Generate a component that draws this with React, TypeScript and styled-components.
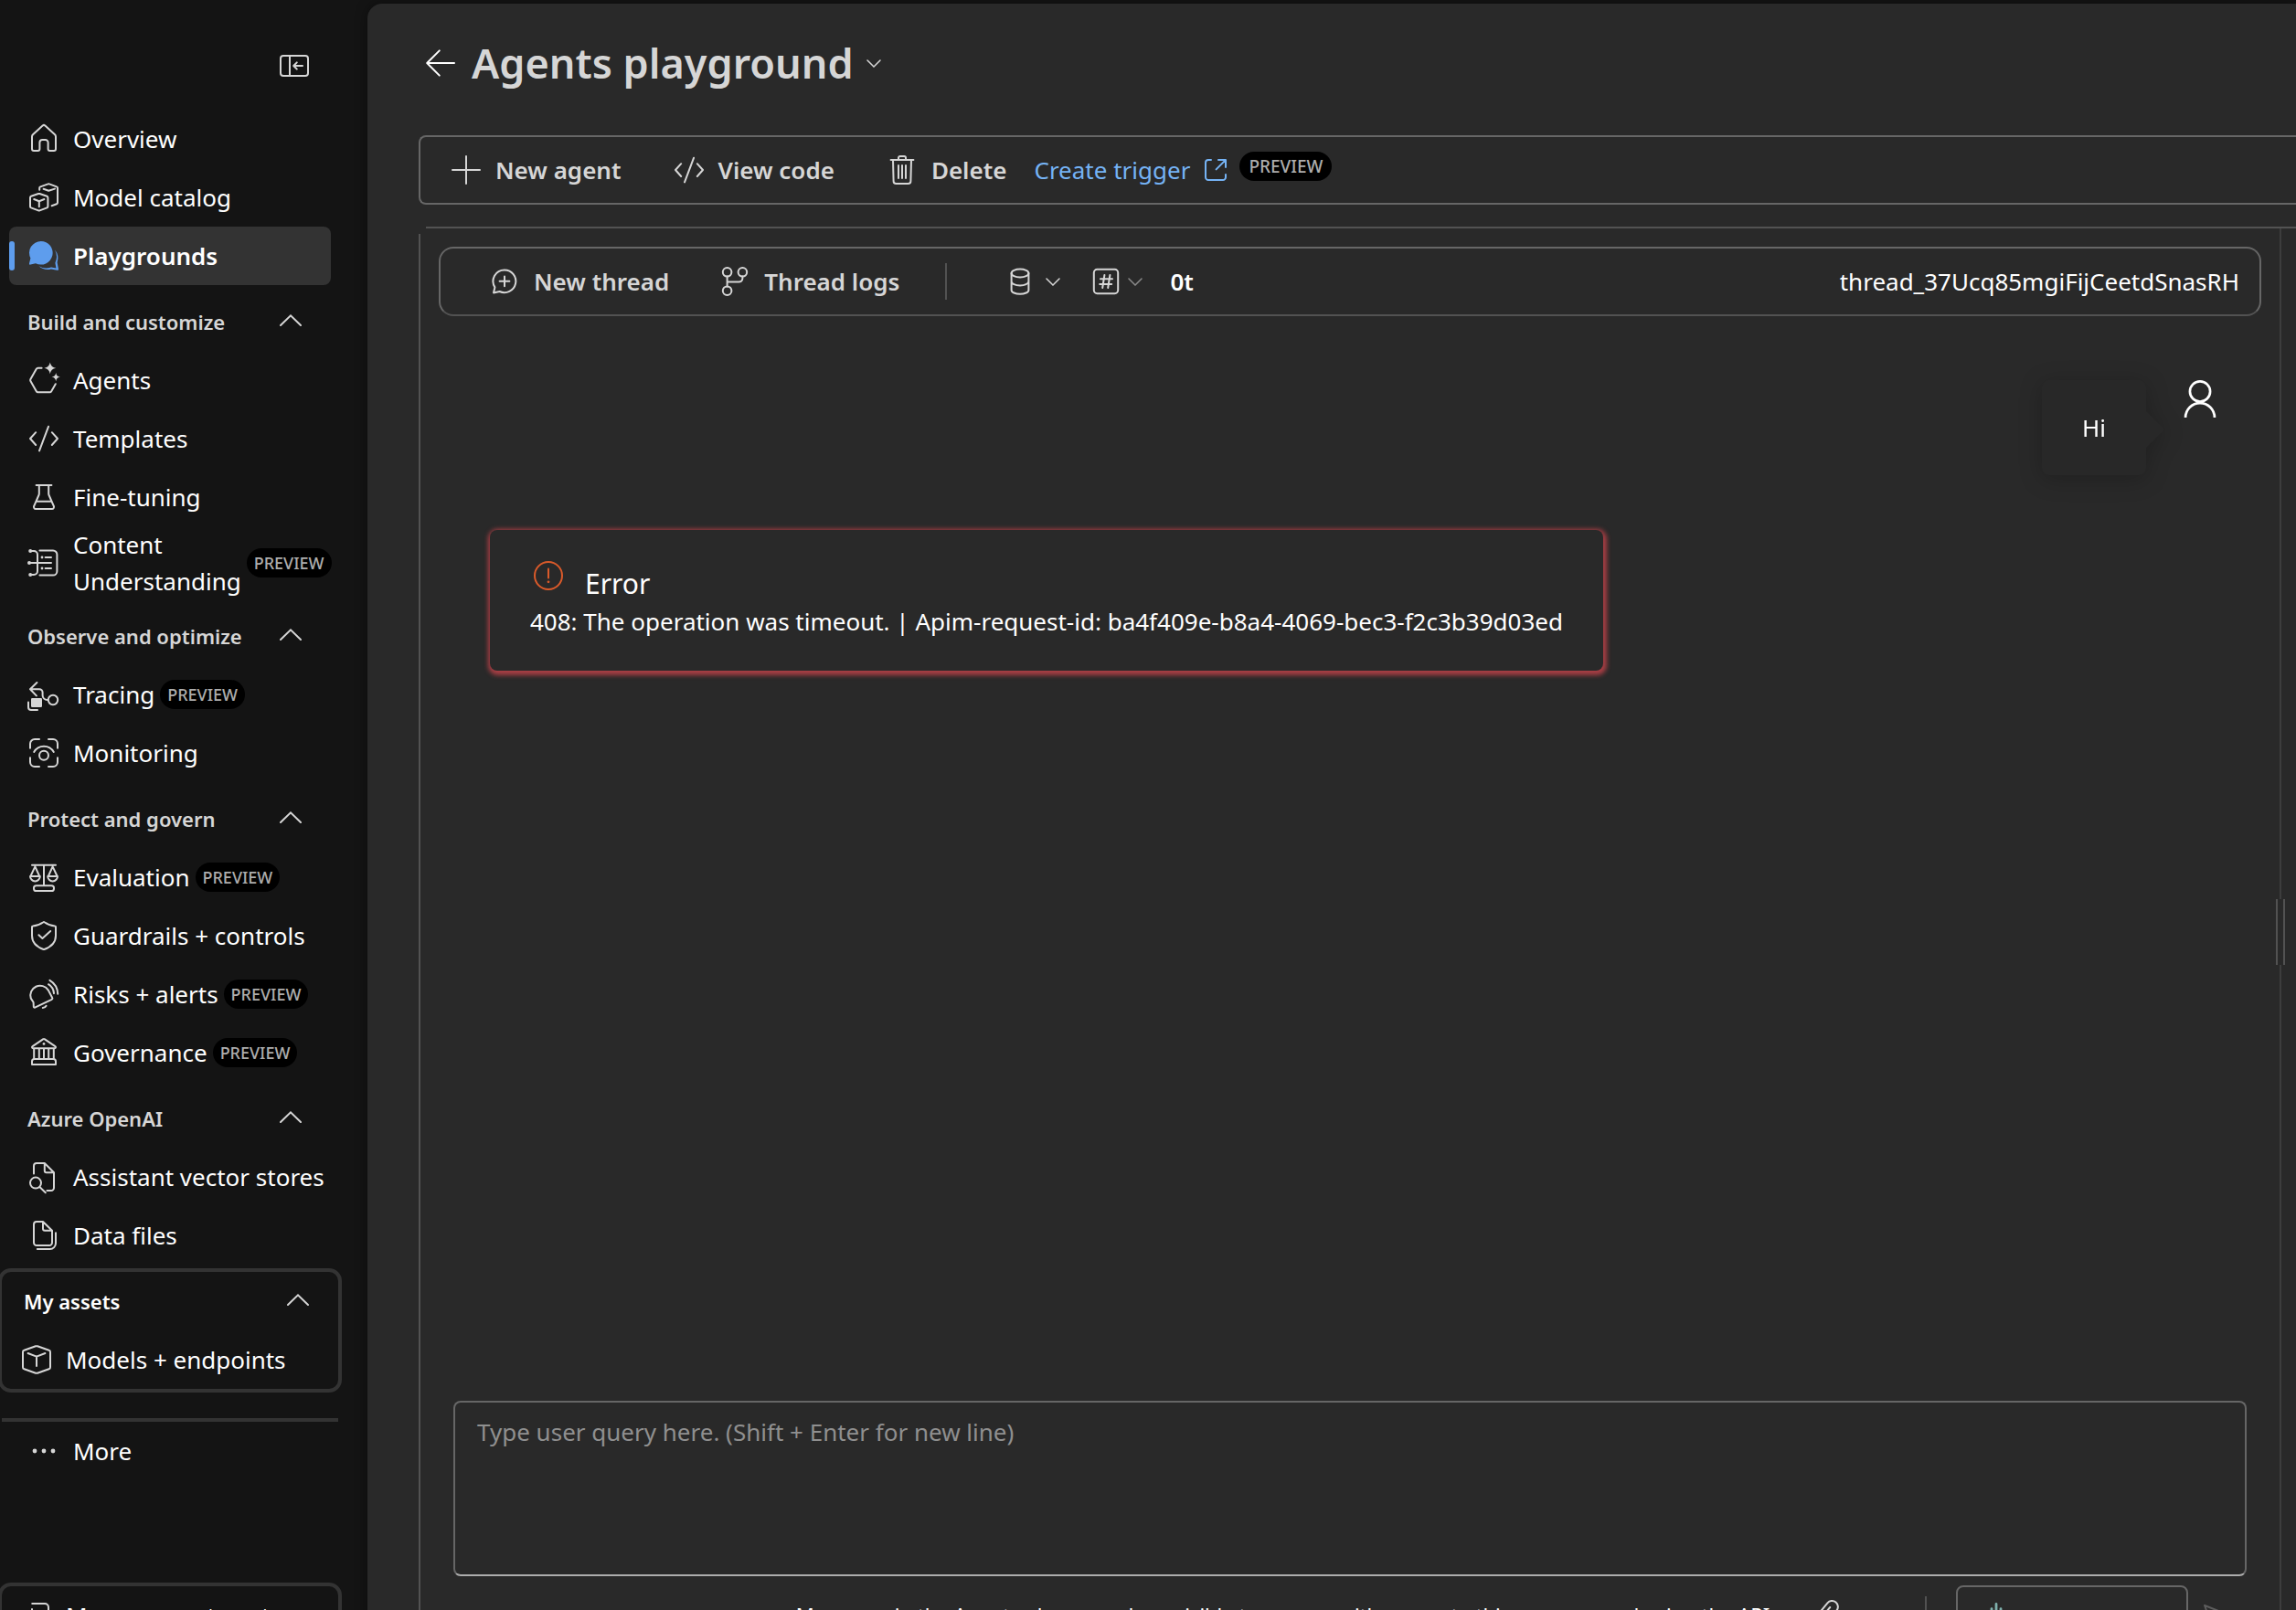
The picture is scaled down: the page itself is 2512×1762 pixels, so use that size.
import React from "react";
import styled, { createGlobalStyle, css } from "styled-components";

const GlobalStyle = createGlobalStyle`
  *, *::before, *::after { box-sizing: border-box; }
  body {
    margin: 0;
    background: #141414;
    color: #ffffff;
    font-family: "Noto Sans", "Open Sans", sans-serif;
    font-size: 26px;
    line-height: 40px;
    overflow: hidden;
  }
  button, textarea { font: inherit; color: inherit; }
  button { background: none; border: 0; padding: 0; cursor: pointer; }
  a { color: inherit; text-decoration: none; }
`;

/* ---------- icons ---------- */

const Glyph = styled.svg<{ $size?: number }>`
  display: block;
  flex: none;
  width: ${(p) => p.$size ?? 40}px;
  height: ${(p) => p.$size ?? 40}px;
  fill: none;
  stroke: currentColor;
  stroke-width: 1;
  stroke-linecap: round;
  stroke-linejoin: round;
`;

const Chevron = styled.svg<{ $width: number }>`
  display: block;
  flex: none;
  width: ${(p) => p.$width}px;
  height: auto;
  fill: none;
  stroke: currentColor;
  stroke-width: 2;
  stroke-linecap: round;
`;

const solid = { fill: "currentColor", stroke: "none" } as const;

const icons = {
  collapse: (
    <>
      <rect x="2.5" y="4.5" width="15" height="11" rx="1.5" />
      <path d="M7.5 4.5v11" />
      <path d="M14.5 10H9.8M11.4 8.2 9.6 10l1.8 1.8" />
    </>
  ),
  home: (
    <path d="M9.3 2.8a1 1 0 0 1 1.4 0L16 7.6a1.5 1.5 0 0 1 .5 1.1v6.8a1 1 0 0 1-1 1h-2.2a1 1 0 0 1-1-1V12a1.5 1.5 0 0 0-1.5-1.5H9.2A1.5 1.5 0 0 0 7.7 12v3.5a1 1 0 0 1-1 1H4.5a1 1 0 0 1-1-1V8.7A1.5 1.5 0 0 1 4 7.6z" />
  ),
  catalog: (
    <>
      <path d="M7 8 3 9.4a.8.8 0 0 0-.5.7V15c0 .3.2.6.5.7l4 1.5h.7l4-1.5c.3-.1.5-.4.5-.7v-4.9a.8.8 0 0 0-.5-.7L7.7 8z" />
      <path d="m4.6 11 2.8 1.1 2.8-1.1M7.4 12.1v3" />
      <path d="M7.6 5.9v-1c0-.3.2-.6.5-.7l4.2-1.5c.2-.1.5-.1.7 0l4 1.5c.3.1.5.4.5.7v8c0 .3-.2.6-.5.7l-2.7 1M9.8 5.4l2.8 1 3.4-1.1" />
    </>
  ),
  chat: (
    <>
      <path {...solid} d="M8.4 2a6.4 6.4 0 1 1-2.9 12.1l-2.8.7a.6.6 0 0 1-.7-.7l.7-2.8A6.4 6.4 0 0 1 8.4 2z" />
      <path {...solid} d="M16 6.8a7 7 0 0 1 1.3 6.8l.7 3.6a.6.6 0 0 1-.7.7l-3.4-.7a7.2 7.2 0 0 1-6.6-1.6 7.9 7.9 0 0 0 6.7.6l2.7.5-.5-2.8A8 8 0 0 0 16 6.8z" />
    </>
  ),
  agent: (
    <>
      <path d="M8.8 3.4H6.8a1 1 0 0 0-.9.5L2.7 9.5a1 1 0 0 0 0 1l3.2 5.6a1 1 0 0 0 .9.5h6.4a1 1 0 0 0 .9-.5l2.3-4" />
      <path {...solid} d="M13.4.2c.5 2 1.2 2.7 3.2 3.2-2 .5-2.7 1.2-3.2 3.2-.5-2-1.2-2.7-3.2-3.2 2-.5 2.7-1.2 3.2-3.2zM16.6 6c.3 1.5.8 2 2.3 2.3-1.5.3-2 .8-2.3 2.3-.3-1.5-.8-2-2.3-2.3 1.500-.3 2-.8 2.300-2.300z" />
    </>
  ),
  code: <path d="M5.6 6.6 2.5 10l3.1 3.5M14.4 6.6 17.5 10l-3.1 3.5M12.5 3.4l-5 13.3" />,
  beaker: (
    <path d="M5.8 3.5h8.4M7.4 3.5v4.7a2 2 0 0 1-.2.8l-2.6 5.9a1.1 1.1 0 0 0 1 1.6h8.8a1.1 1.1 0 0 0 1-1.6L12.8 9a2 2 0 0 1-.2-.8V3.5M5.9 12.4h8.2" />
  ),
  content: (
    <>
      <path d="M2.4 3.5h2.1a2 2 0 0 1 2 2v9a2 2 0 0 1-2 2H2.4M2 10h12M7.700 3.200H15A2.200 2.200 0 0 1 17.200 5.400v9.200A2.200 2.200 0 0 1 15 16.800H7.700M10.800 7H14M10.800 13H14" />
      <g {...solid}>
        <circle cx="2.6" cy="3.5" r="1" />
        <circle cx="2" cy="10" r="1" />
        <circle cx="2.6" cy="16.5" r="1" />
        <circle cx="9" cy="7" r=".7" />
        <circle cx="9" cy="13" r=".7" />
      </g>
    </>
  ),
  trace: (
    <>
      <path d="M6.2 3.5 2.5 7.1l3.4 3.6M2.5 7.1h5A1.8 1.8 0 0 1 9.3 8.9v1.6a2.6 2.6 0 0 0 2.6 2.5" />
      <circle cx="15" cy="13" r="2.6" />
      <rect {...solid} x="3" y="12" width="6" height="5" rx=".6" />
      <path d="M1.5 14.3v2.7A1.5 1.5 0 0 0 3 18.5h3.5" />
    </>
  ),
  monitor: (
    <>
      <path d="M2.5 7.4V5A2.5 2.5 0 0 1 5 2.5h2.5M12.5 2.5H15A2.5 2.5 0 0 1 17.5 5v2.4M17.5 12.6V15a2.5 2.5 0 0 1-2.5 2.5h-2.5M7.5 17.5H5A2.5 2.5 0 0 1 2.5 15v-2.4M4.6 9.5a6.200 6.200 0 0 1 10.800 0" />
      <circle cx="10" cy="11.4" r="2.5" />
    </>
  ),
  scale: (
    <>
      <path d="M3.5 3.4h13M10 3.4v10.8M5.2 4.2 2.7 9.5M5.2 4.2l2.4 5.3M14.8 4.2l-2.4 5.3M14.8 4.2l2.5 5.3M2.5 9.5h5.4a2.7 2.7 0 0 1-5.4 0zM12.1 9.5h5.4a2.7 2.7 0 0 1-5.4 0z" />
      <rect x="4.5" y="14.6" width="11" height="2.9" rx="1.3" />
    </>
  ),
  shield: (
    <>
      <path d="M9.7 2.6a.5.5 0 0 1 .6 0c1.7 1.2 3.5 1.9 5.7 2.1.3 0 .5.2.5.5V10c0 3.5-2.2 6-6.300 7.500h-.4C5.700 16 3.500 13.500 3.500 10V5.200c0-.3.2-.5.5-.5 2.200-.2 4-.9 5.700-2.100z" />
      <path d="m7.2 9.6 2 1.9 4.4-4" />
    </>
  ),
  alert: (
    <path d="M2.9 12.3a5.3 5.3 0 0 1 9.5-4.5l2.2 4.2a.6.6 0 0 1-.3.9L5.1 17.3a.5.5 0 0 1-.7-.5l-.1-2.3zM9.400 17.500c.9 0 1.500-.4 1.900-1.100M12.500 4.600a6.500 6.500 0 0 1 3 5M13.200 2.400a9 9 0 0 1 4.400 7.500" />
  ),
  bank: (
    <>
      <path d="M9.7 2.6a.5.5 0 0 1 .6 0l5.9 4c.5.3.3 1-.3 1H4.1c-.6 0-.8-.7-.3-1zM4.6 7.6v5.7M7.4 7.6v5.7M10 7.6v5.7M12.6 7.6v5.7M15.4 7.6v5.7" />
      <path d="M4.8 13.5h10.4a1.3 1.3 0 0 1 1.3 1.3v1.7h-13v-1.7a1.3 1.3 0 0 1 1.3-1.3z" />
      <circle {...solid} cx="10" cy="5.2" r=".7" />
    </>
  ),
  docSearch: (
    <>
      <path d="M4.5 8.3V4A1.5 1.5 0 0 1 6 2.5h4.4l5.1 5.1v8.4a1.5 1.5 0 0 1-1.5 1.5h-2.3M10.4 2.5v4.1a1 1 0 0 0 1 1h4.1" />
      <circle cx="5.5" cy="13.3" r="3" />
      <path d="m7.7 15.5 3.2 3.1" />
    </>
  ),
  docs: (
    <path d="M9.5 2.5H6A1.5 1.5 0 0 0 4.5 4v10A1.5 1.5 0 0 0 6 15.5h7a1.5 1.5 0 0 0 1.5-1.5V7.4zM9.5 2.5v3.9a1 1 0 0 0 1 1h4M6.400 17.500h6.900a3.200 3.200 0 0 0 3.200-3.200V8.600" />
  ),
  cube: (
    <>
      <path d="M9.5 2.6 3.2 4.9a1 1 0 0 0-.7 1v8.2a1 1 0 0 0 .7 1l6.3 2.3h1l6.3-2.3a1 1 0 0 0 .7-1V5.9a1 1 0 0 0-.7-1l-6.3-2.3z" />
      <path d="M5.3 6.5 10 8.3l4.7-1.8M10 8.3v5.2" />
    </>
  ),
  more: (
    <g {...solid}>
      <circle cx="5" cy="10" r="1.2" />
      <circle cx="10" cy="10" r="1.2" />
      <circle cx="15" cy="10" r="1.2" />
    </g>
  ),
  manage: <path d="M7.6 3.5h6.9a2 2 0 0 1 2 2v9a2 2 0 0 1-2 2H7.6M7.5 6.5v7" />,
  back: <path d="M17.5 10H2.8M9.4 3.2 2.6 10l6.8 6.8" />,
  plus: <path d="M10 2.5v15M2.5 10h15" />,
  trash: (
    <path d="M3.8 4.5h12.4M8 4.5V3.4a.9.9 0 0 1 .9-.9h2.2a.9.9 0 0 1 .9.9v1.1M5 4.5l.3 11.6a1.400 1.400 0 0 0 1.400 1.400h6.600a1.400 1.400 0 0 0 1.400-1.400L15 4.500M8 7.500v7M10 7.500v7M12 7.500v7" />
  ),
  open: (
    <path d="M7.5 4.5H6A1.5 1.5 0 0 0 4.5 6v8A1.5 1.5 0 0 0 6 15.5h8a1.5 1.5 0 0 0 1.5-1.5v-1.5M11.5 4.5h4v4M15.300 4.700l-5 5" />
  ),
  newThread: (
    <path d="M10 3.7a6.2 6.2 0 1 1-2.7 11.8l-3.3.7.7-3A6.2 6.2 0 0 1 10 3.7zM10 7.2v5.4M7.3 9.9h5.4" />
  ),
  branch: (
    <>
      <circle cx="5.8" cy="4.9" r="2.4" />
      <circle cx="14.2" cy="4.9" r="2.4" />
      <circle cx="5.8" cy="15.1" r="2.4" />
      <path d="M5.8 7.3v5.4M5.8 10.3h6.4a2 2 0 0 0 2-2v-1" />
    </>
  ),
  database: (
    <>
      <ellipse cx="10" cy="5.5" rx="4.7" ry="2.2" />
      <path d="M5.3 5.5v9.2c0 1.2 2.1 2.2 4.7 2.2s4.7-1 4.7-2.2V5.5M5.3 10c0 1.2 2.1 2.2 4.7 2.2s4.7-1 4.7-2.2" />
    </>
  ),
  hash: (
    <>
      <rect x="3.4" y="3.4" width="13.2" height="13.2" rx="1.8" />
      <path d="M9.2 6.5 8.1 13.5M12.2 6.5l-1.1 7M7 8.6h6.5M6.6 11.5h6.5" />
    </>
  ),
  error: (
    <>
      <circle cx="10" cy="10" r="7.5" />
      <path d="M10 6.3v5" />
      <circle {...solid} cx="10" cy="13.4" r=".7" />
    </>
  ),
  person: (
    <>
      <circle cx="10" cy="4.6" r="4.1" />
      <path d="M4.1 15.2a5.9 5.9 0 0 1 11.8 0" strokeLinecap="butt" />
    </>
  ),
  attach: <path d="m4.5 10 5.2-6.3a3.2 3.2 0 0 1 5 4.1l-6.6 8a2 2 0 0 1-3-2.5l6-7.3" />,
  voice: <path d="M10 4.2v11.6M7.5 6.8v6.4M12.5 6.8v6.4M5 9v2M15 9v2" strokeWidth="1.4" />,
  send: <path d="m3 5 14 5.5L3 16l2-5.5zM5 10.5h6" />,
};

type IconName = keyof typeof icons;

const Icon = ({ name, size }: { name: IconName; size?: number }) => (
  <Glyph viewBox="0 0 20 20" $size={size} aria-hidden="true">
    {icons[name]}
  </Glyph>
);

const ChevronUp = () => (
  <Chevron viewBox="0 0 24 13" $width={24} aria-hidden="true">
    <path d="M1 12 12 1.4 23 12" />
  </Chevron>
);

const ChevronDown = () => (
  <Chevron viewBox="0 0 16 9" $width={16} aria-hidden="true">
    <path d="m1 1 7 7 7-7" strokeWidth="1.5" />
  </Chevron>
);

/* ---------- shell ---------- */

const Shell = styled.div`
  display: flex;
  height: 100vh;
  overflow: hidden;
`;

/* ---------- sidebar ---------- */

const Sidebar = styled.aside`
  display: flex;
  flex-direction: column;
  flex: 0 0 402px;
  overflow: hidden;
  > * { flex-shrink: 0; }
`;

const SidebarTop = styled.div`
  display: flex;
  justify-content: flex-end;
  padding: 52px 60px 28px 0;
  color: #d6d6d6;
`;

const IconButton = styled.button`
  display: flex;
  align-items: center;
`;

const NavArea = styled.nav`
  padding: 0 40px 0 10px;
`;

const NavItem = styled.a<{ $active?: boolean }>`
  position: relative;
  display: flex;
  align-items: center;
  gap: 12px;
  min-height: 64px;
  padding-left: 18px;
  border-radius: 8px;
  > svg { color: #d6d6d6; }
  ${(p) =>
    p.$active &&
    css`
      background: #333333;
      font-weight: 600;
      > svg { color: #5e9ded; }
      &::before {
        content: "";
        position: absolute;
        left: 0;
        top: 16px;
        bottom: 16px;
        width: 6px;
        border-radius: 3px;
        background: #5e9ded;
      }
    `}
`;

const NavText = styled.span`
  display: flex;
  align-items: center;
  gap: 6px;
`;

const Badge = styled.span<{ $large?: boolean }>`
  flex: none;
  height: 32px;
  padding: 0 8px;
  border-radius: 16px;
  background: #000000;
  color: #adadad;
  font-size: 18px;
  line-height: 32px;
  font-weight: 500;
  ${(p) =>
    p.$large &&
    css`
      margin: 0 0 8px -8px;
      padding: 0 10px;
      font-size: 19px;
    `}
`;

const GroupHeading = styled.button<{ $boxed?: boolean }>`
  display: flex;
  align-items: center;
  justify-content: space-between;
  width: 100%;
  height: 64px;
  margin-top: ${(p) => (p.$boxed ? 0 : 8)}px;
  padding: 0 32px 0 ${(p) => (p.$boxed ? 24 : 20)}px;
  font-size: 22px;
  font-weight: 600;
  color: ${(p) => (p.$boxed ? "#ffffff" : "#d6d6d6")};
  > svg { margin-bottom: 4px; color: #d6d6d6; }
`;

const OutlinedGroup = styled.div<{ $top: number }>`
  margin: ${(p) => p.$top}px 28px 0 -2px;
  border: 4px solid #333333;
  border-radius: 14px;
`;

const Rule = styled.hr`
  height: 4px;
  margin: 28px 32px 0 2px;
  border: 0;
  background: #333333;
`;

interface Entry {
  icon: IconName;
  label: string;
  preview?: boolean;
  active?: boolean;
}

const topEntries: Entry[] = [
  { icon: "home", label: "Overview" },
  { icon: "catalog", label: "Model catalog" },
  { icon: "chat", label: "Playgrounds", active: true },
];

const groups: { title: string; entries: Entry[] }[] = [
  {
    title: "Build and customize",
    entries: [
      { icon: "agent", label: "Agents" },
      { icon: "code", label: "Templates" },
      { icon: "beaker", label: "Fine-tuning" },
      { icon: "content", label: "Content Understanding", preview: true },
    ],
  },
  {
    title: "Observe and optimize",
    entries: [
      { icon: "trace", label: "Tracing", preview: true },
      { icon: "monitor", label: "Monitoring" },
    ],
  },
  {
    title: "Protect and govern",
    entries: [
      { icon: "scale", label: "Evaluation", preview: true },
      { icon: "shield", label: "Guardrails + controls" },
      { icon: "alert", label: "Risks + alerts", preview: true },
      { icon: "bank", label: "Governance", preview: true },
    ],
  },
  {
    title: "Azure OpenAI",
    entries: [
      { icon: "docSearch", label: "Assistant vector stores" },
      { icon: "docs", label: "Data files" },
    ],
  },
];

const NavEntry = ({ icon, label, preview, active }: Entry) => (
  <NavItem href="#" $active={active} aria-current={active ? "page" : undefined}>
    <Icon name={icon} />
    <NavText>
      <span>{label}</span>
      {preview && <Badge>PREVIEW</Badge>}
    </NavText>
  </NavItem>
);

/* ---------- main ---------- */

const Main = styled.main`
  display: flex;
  flex-direction: column;
  flex: 1;
  min-width: 0;
  height: calc(100vh + 45px);
  margin-top: 4px;
  padding-left: 56px;
  border-radius: 16px 0 0 0;
  background: #292929;
  box-shadow: 0 0 14px rgba(0, 0, 0, 0.4);
`;

const Header = styled.header`
  display: flex;
  align-items: center;
  height: 144px;
  padding: 0 0 14px 4px;
  gap: 14px;
`;

const Title = styled.h1`
  margin: 0;
  font-size: 45px;
  line-height: 64px;
  font-weight: 600;
  color: #d6d6d6;
`;

const TitleButton = styled(IconButton)`
  color: #d6d6d6;
`;

const Toolbar = styled.div`
  display: flex;
  align-items: center;
  gap: 14px;
  flex: none;
  height: 76px;
  padding-left: 10px;
  border: 2px solid #666666;
  border-right: 0;
  border-radius: 8px 0 0 8px;
`;

const ToolButton = styled.button`
  display: flex;
  align-items: center;
  gap: 12px;
  padding: 0 20px;
  font-weight: 600;
  color: #d6d6d6;
`;

const TriggerLink = styled.a`
  display: flex;
  align-items: center;
  gap: 8px;
  margin-left: -4px;
  color: #75b3f5;
`;

const PanelRule = styled.div`
  flex: none;
  height: 2px;
  margin: 24px 0 0 8px;
  background: #525252;
`;

const Panel = styled.div`
  display: flex;
  flex: 1;
  min-height: 0;
`;

const Chat = styled.section`
  display: flex;
  flex-direction: column;
  flex: 1;
  min-width: 0;
  margin-top: 6px;
  padding: 14px 20px 12px;
  border-left: 2px solid #525252;
`;

const Splitter = styled.div`
  position: relative;
  flex: 0 0 18px;
  border-left: 2px solid #3d3d3d;
  &::after {
    content: "";
    position: absolute;
    left: -6px;
    top: 734px;
    width: 10px;
    height: 72px;
    border: solid #525252;
    border-width: 0 2px;
    background: #292929;
  }
`;

const ThreadBar = styled.div`
  display: flex;
  align-items: center;
  gap: 12px;
  flex: none;
  height: 76px;
  padding: 0 22px 0 30px;
  border: 2px solid #666666;
  border-bottom-color: #525252;
  border-radius: 16px;
`;

const BarDivider = styled.span<{ $before: number; $after: number }>`
  flex: none;
  width: 2px;
  height: 40px;
  margin: 0 ${(p) => p.$after}px 0 ${(p) => p.$before}px;
  background: #525252;
`;

const MenuButton = styled.button<{ $gap: number; $dim?: boolean }>`
  display: flex;
  align-items: center;
  gap: ${(p) => p.$gap}px;
  margin-right: 18px;
  color: #d6d6d6;
  > svg:last-child { color: ${(p) => (p.$dim ? "#8a8a8a" : "#d6d6d6")}; }
`;

const TokenCount = styled.span`
  font-weight: 600;
`;

const ThreadId = styled.span`
  margin-left: auto;
`;

const Messages = styled.div`
  flex: 1;
  padding: 70px 40px 0 56px;
`;

const UserMessage = styled.div`
  display: flex;
  justify-content: flex-end;
  gap: 32px;
`;

const Bubble = styled.p`
  position: relative;
  margin: 0;
  padding: 32px 44px;
  border-radius: 8px;
  background: #282828;
  filter: drop-shadow(0 4px 12px rgba(0, 0, 0, 0.22));
  &::after {
    content: "";
    position: absolute;
    left: 100%;
    top: 34px;
    border: solid transparent;
    border-width: 20px 0 20px 20px;
    border-left-color: #282828;
  }
`;

const ErrorCard = styled.div`
  width: fit-content;
  margin-top: 60px;
  padding: 30px 44px 34px;
  border-radius: 8px;
  background: #292929;
  box-shadow: 1px 2px 5px 3px #a83e44;
`;

const ErrorTitle = styled.div`
  display: flex;
  align-items: flex-start;
  gap: 20px;
  height: 50px;
  font-size: 30px;
  line-height: 58px;
  > svg { color: #da5a2a; }
`;

const ErrorText = styled.p`
  margin: 0;
`;

const Query = styled.textarea`
  display: block;
  height: 192px;
  margin: 0 16px;
  padding: 12px 24px;
  border: 2px solid #666666;
  border-bottom-color: #adadad;
  border-radius: 8px;
  background: transparent;
  outline: 0;
  resize: none;
  &::placeholder { color: #8f8f8f; opacity: 1; }
`;

const ComposerBar = styled.div`
  display: flex;
  align-items: center;
  justify-content: flex-end;
  height: 64px;
  margin-top: 10px;
  padding-right: 28px;
  color: #d6d6d6;
`;

const Notice = styled.span`
  margin-right: 38px;
  font-size: 22px;
  color: #ffffff;
`;

const VoiceButton = styled.button`
  display: flex;
  align-items: center;
  width: 254px;
  height: 64px;
  padding-left: 22px;
  border: 2px solid #666666;
  border-radius: 8px;
  color: #7fb0ac;
`;

const SendButton = styled(IconButton)`
  margin-left: 12px;
  color: #5c5c5c;
`;

export default function App() {
  return (
    <>
      <GlobalStyle />
      <Shell>
        <Sidebar>
          <SidebarTop>
            <IconButton aria-label="Collapse navigation">
              <Icon name="collapse" />
            </IconButton>
          </SidebarTop>
          <NavArea aria-label="Main">
            {topEntries.map((e) => (
              <NavEntry key={e.label} {...e} />
            ))}
            {groups.map((g) => (
              <React.Fragment key={g.title}>
                <GroupHeading aria-expanded="true">
                  {g.title}
                  <ChevronUp />
                </GroupHeading>
                {g.entries.map((e) => (
                  <NavEntry key={e.label} {...e} />
                ))}
              </React.Fragment>
            ))}
          </NavArea>
          <OutlinedGroup $top={4}>
            <GroupHeading $boxed aria-expanded="true">
              My assets
              <ChevronUp />
            </GroupHeading>
            <NavEntry icon="cube" label="Models + endpoints" />
          </OutlinedGroup>
          <Rule />
          <NavArea as="div">
            <NavEntry icon="more" label="More" />
          </NavArea>
          <OutlinedGroup $top={112}>
            <NavEntry icon="manage" label="Management center" />
          </OutlinedGroup>
        </Sidebar>

        <Main>
          <Header>
            <IconButton aria-label="Back">
              <Icon name="back" />
            </IconButton>
            <Title>Agents playground</Title>
            <TitleButton aria-label="Switch playground">
              <ChevronDown />
            </TitleButton>
          </Header>

          <Toolbar role="toolbar" aria-label="Agent actions">
            <ToolButton>
              <Icon name="plus" />
              New agent
            </ToolButton>
            <ToolButton>
              <Icon name="code" />
              View code
            </ToolButton>
            <ToolButton>
              <Icon name="trash" />
              Delete
            </ToolButton>
            <TriggerLink href="#">
              Create trigger
              <Icon name="open" />
            </TriggerLink>
            <Badge $large>PREVIEW</Badge>
          </Toolbar>

          <PanelRule />
          <Panel>
            <Chat>
              <ThreadBar role="toolbar" aria-label="Thread actions">
                <ToolButton>
                  <Icon name="newThread" />
                  New thread
                </ToolButton>
                <ToolButton>
                  <Icon name="branch" />
                  Thread logs
                </ToolButton>
                <BarDivider $before={18} $after={48} />
                <MenuButton $gap={8} aria-label="Data">
                  <Icon name="database" />
                  <ChevronDown />
                </MenuButton>
                <MenuButton $gap={4} $dim aria-label="Token usage">
                  <Icon name="hash" />
                  <ChevronDown />
                </MenuButton>
                <TokenCount>0t</TokenCount>
                <ThreadId>thread_37Ucq85mgiFijCeetdSnasRH</ThreadId>
              </ThreadBar>

              <Messages>
                <UserMessage>
                  <Bubble>Hi</Bubble>
                  <Icon name="person" size={54} />
                </UserMessage>
                <ErrorCard role="alert">
                  <ErrorTitle>
                    <Icon name="error" />
                    Error
                  </ErrorTitle>
                  <ErrorText>
                    408: The operation was timeout. | Apim-request-id: ba4f409e-b8a4-4069-bec3-f2c3b39d03ed
                  </ErrorText>
                </ErrorCard>
              </Messages>

              <Query
                aria-label="User query"
                placeholder="Type user query here. (Shift + Enter for new line)"
              />
              <ComposerBar>
                <Notice>
                  Messages in the Agents playground are visible to anyone with access to this resource and using the API.
                </Notice>
                <IconButton aria-label="Attach file">
                  <Icon name="attach" />
                </IconButton>
                <BarDivider $before={86} $after={32} />
                <VoiceButton aria-label="Voice input">
                  <Icon name="voice" />
                </VoiceButton>
                <SendButton aria-label="Send">
                  <Icon name="send" />
                </SendButton>
              </ComposerBar>
            </Chat>
            <Splitter role="separator" aria-orientation="vertical" />
          </Panel>
        </Main>
      </Shell>
    </>
  );
}
